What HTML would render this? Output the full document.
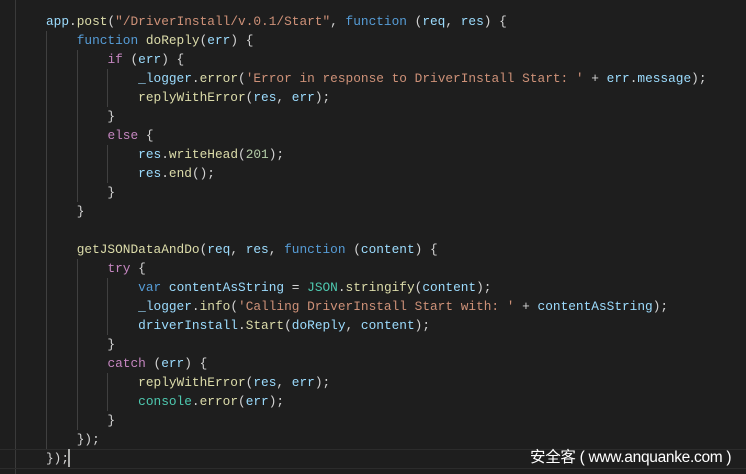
<!DOCTYPE html>
<html><head><meta charset="utf-8"><style>
html,body{margin:0;padding:0;background:#1e1e1e;width:746px;height:474px;overflow:hidden;position:relative}
.code{position:absolute;left:46px;top:12px;font-family:"Liberation Mono",monospace;font-size:12.8px;line-height:19px;color:#d4d4d4;white-space:pre}
.k{color:#569cd6}.s{color:#ce9178}.f{color:#dcdcaa}.v{color:#9cdcfe}.c{color:#c586c0}.t{color:#4ec9b0}
.g{position:absolute;width:1px;background:#404040}
.cur{position:absolute;left:0;top:449px;width:746px;height:18px;border-top:1px solid #2c2c2c;border-bottom:1px solid #2c2c2c}
.wm{position:absolute;left:530px;top:445px;color:#fff;font-family:"Liberation Sans","Noto Sans CJK SC",sans-serif;font-size:15.5px;letter-spacing:-0.3px}
</style></head><body>
<div class="g" style="left:15px;top:0;height:474px;background:#3a3a3a"></div>
<div class="cur"></div>
<div class="g" style="left:46px;top:31px;height:418px"></div>
<div class="g" style="left:77px;top:50px;height:152px"></div>
<div class="g" style="left:107px;top:69px;height:38px"></div>
<div class="g" style="left:107px;top:145px;height:38px"></div>
<div class="g" style="left:77px;top:259px;height:171px"></div>
<div class="g" style="left:107px;top:278px;height:57px"></div>
<div class="g" style="left:107px;top:373px;height:38px"></div>
<div style="position:absolute;left:68px;top:449px;width:2px;height:18px;background:#aeafad"></div>
<div class="code"><span class="v">app</span>.<span class="f">post</span>(<span class="s">"/DriverInstall/v.0.1/Start"</span>, <span class="k">function</span> (<span class="v">req</span>, <span class="v">res</span>) {
    <span class="k">function</span> <span class="f">doReply</span>(<span class="v">err</span>) {
        <span class="c">if</span> (<span class="v">err</span>) {
            <span class="v">_logger</span>.<span class="f">error</span>(<span class="s">'Error in response to DriverInstall Start: '</span> + <span class="v">err</span>.<span class="v">message</span>);
            <span class="f">replyWithError</span>(<span class="v">res</span>, <span class="v">err</span>);
        }
        <span class="c">else</span> {
            <span class="v">res</span>.<span class="f">writeHead</span>(<span style="color:#b5cea8">201</span>);
            <span class="v">res</span>.<span class="f">end</span>();
        }
    }

    <span class="f">getJSONDataAndDo</span>(<span class="v">req</span>, <span class="v">res</span>, <span class="k">function</span> (<span class="v">content</span>) {
        <span class="c">try</span> {
            <span class="k">var</span> <span class="v">contentAsString</span> = <span class="t">JSON</span>.<span class="f">stringify</span>(<span class="v">content</span>);
            <span class="v">_logger</span>.<span class="f">info</span>(<span class="s">'Calling DriverInstall Start with: '</span> + <span class="v">contentAsString</span>);
            <span class="v">driverInstall</span>.<span class="f">Start</span>(<span class="v">doReply</span>, <span class="v">content</span>);
        }
        <span class="c">catch</span> (<span class="v">err</span>) {
            <span class="f">replyWithError</span>(<span class="v">res</span>, <span class="v">err</span>);
            <span class="t">console</span>.<span class="f">error</span>(<span class="v">err</span>);
        }
    });
});</div>
<div class="wm">安全客 ( www.anquanke.com )</div>
</body></html>
